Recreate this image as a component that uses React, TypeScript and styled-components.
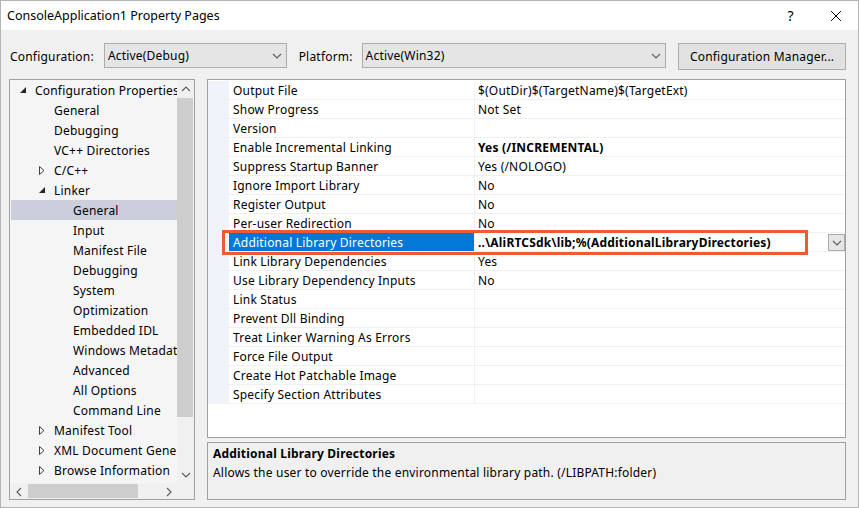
import * as React from "react";
import styled, { createGlobalStyle } from "styled-components";

const GlobalStyle = createGlobalStyle`
  html, body {
    margin: 0;
    padding: 0;
    background: #ffffff;
  }
  body {
    font-family: "Noto Sans", "Liberation Sans", sans-serif;
    font-size: 12px;
    letter-spacing: 0.2px;
    color: #000000;
  }
  * {
    box-sizing: border-box;
  }
`;

const Window = styled.div`
  width: 859px;
  height: 508px;
  border: 1px solid #b4b4b4;
  display: flex;
  flex-direction: column;
  background: #f0f0f0;
  overflow: hidden;
`;

const TitleBar = styled.div`
  height: 29px;
  flex: none;
  display: flex;
  align-items: center;
  background: #ffffff;
  padding-left: 6px;
  font-size: 12.5px;
  letter-spacing: 0;
`;

const TitleText = styled.div`
  flex: 1;
`;

const TitleButton = styled.div`
  width: 45px;
  height: 29px;
  display: flex;
  align-items: center;
  justify-content: center;
  font-size: 14px;
`;

const Body = styled.div`
  flex: 1;
  display: flex;
  flex-direction: column;
  padding: 13px 12px 7px 8px;
  min-height: 0;
`;

const ConfigRow = styled.div`
  display: flex;
  align-items: flex-start;
  height: 27px;
  flex: none;
`;

const Label = styled.div<{ $width: number; $gap?: number }>`
  width: ${(p) => p.$width}px;
  margin-left: ${(p) => p.$gap ?? 0}px;
  height: 27px;
  display: flex;
  align-items: center;
  padding-left: 1px;
`;

const Combo = styled.div<{ $width: number }>`
  width: ${(p) => p.$width}px;
  height: 25px;
  display: flex;
  align-items: center;
  background: #e5e5e5;
  border: 1px solid #acacac;
  padding: 0 4px 0 3px;
`;

const ComboText = styled.span`
  flex: 1;
`;

const Button = styled.div`
  width: 168px;
  height: 27px;
  margin-left: 12px;
  display: flex;
  align-items: center;
  justify-content: center;
  background: #e1e1e1;
  border: 1px solid #adadad;
`;

const Main = styled.div`
  flex: 1;
  display: flex;
  margin-top: 9px;
  min-height: 0;
`;

const TreePanel = styled.div`
  width: 186px;
  flex: none;
  border: 1px solid #a0a0a0;
  display: grid;
  grid-template-columns: 1fr 17px;
  grid-template-rows: 1fr 16px;
  background: #f0f0f0;
`;

const TreeList = styled.div`
  background: #f5f5f5;
  padding: 0 0 0 1px;
  overflow: hidden;
`;

const TreeRow = styled.div<{ $level: number; $selected?: boolean }>`
  height: 20px;
  display: flex;
  align-items: center;
  white-space: nowrap;
  padding-left: ${(p) => 6 + p.$level * 19}px;
  background: ${(p) => (p.$selected ? "#cccedb" : "transparent")};
`;

const ToggleSlot = styled.span`
  width: 18px;
  flex: none;
  display: flex;
  justify-content: flex-end;
  padding-right: 9px;
`;

const VScroll = styled.div`
  display: flex;
  flex-direction: column;
  background: #f0f0f0;
`;

const HScroll = styled.div`
  display: flex;
  align-items: stretch;
  background: #f0f0f0;
`;

const ScrollArrow = styled.div`
  width: 17px;
  height: 17px;
  flex: none;
  display: flex;
  align-items: center;
  justify-content: center;
`;

const VThumb = styled.div`
  height: 319px;
  margin: 1px 1px 0 0;
  background: #cdcdcd;
`;

const Spacer = styled.div`
  flex: 1;
`;

const HThumb = styled.div`
  width: 110px;
  margin: 1px 0 1px 1px;
  background: #cdcdcd;
`;

const RightColumn = styled.div`
  flex: 1;
  margin-left: 12px;
  display: flex;
  flex-direction: column;
  min-width: 0;
`;

const Grid = styled.div`
  position: relative;
  flex: 1;
  background: #ffffff;
  border: 1px solid #a0a0a0;
  padding-top: 1px;
`;

const GridRow = styled.div`
  height: 19px;
  display: grid;
  grid-template-columns: 21px 245px 1fr;
`;

const MarginCell = styled.div`
  background: #f0f4fa;
`;

const NameCell = styled.div<{ $selected?: boolean }>`
  display: flex;
  align-items: center;
  padding-left: 4px;
  white-space: nowrap;
  border-bottom: 1px solid #f0f0f0;
  background: ${(p) => (p.$selected ? "#0078d7" : "#ffffff")};
  color: ${(p) => (p.$selected ? "#ffffff" : "#000000")};
`;

const ValueCell = styled.div<{ $bold?: boolean }>`
  display: flex;
  align-items: center;
  padding-left: 3px;
  white-space: nowrap;
  border-left: 1px solid #f0f0f0;
  border-bottom: 1px solid #f0f0f0;
  font-weight: ${(p) => (p.$bold ? 700 : 400)};
`;

const CellDrop = styled.div`
  width: 17px;
  height: 17px;
  margin-left: auto;
  margin-top: 1px;
  display: flex;
  align-items: center;
  justify-content: center;
  background: #e5e5e5;
  border: 1px solid #acacac;
`;

const Highlight = styled.div`
  position: absolute;
  left: 14px;
  top: 150px;
  width: 586px;
  height: 25px;
  border: 3px solid #ee5a36;
  pointer-events: none;
`;

const Description = styled.div`
  height: 58px;
  flex: none;
  margin-top: 4px;
  border: 1px solid #a0a0a0;
  padding: 1px 5px;
  line-height: 19px;
`;

const DescTitle = styled.div`
  font-weight: 700;
`;

const Chevron = ({ dir = "down" }: { dir?: "down" | "up" | "left" | "right" }) => {
  const pts = {
    down: "1,1 5,5 9,1",
    up: "1,5 5,1 9,5",
    left: "5,1 1,5 5,9",
    right: "1,1 5,5 1,9",
  }[dir];
  const vertical = dir === "down" || dir === "up";
  return (
    <svg width={vertical ? 10 : 6} height={vertical ? 6 : 10} viewBox={vertical ? "0 0 10 6" : "0 0 6 10"}>
      <polyline points={pts} fill="none" stroke="#606060" strokeWidth="1.2" />
    </svg>
  );
};

const Toggle = ({ state }: { state?: "open" | "closed" }) => {
  if (state === "open")
    return (
      <svg width="6" height="6" viewBox="0 0 6 6">
        <polygon points="6,0 6,6 0,6" fill="#262626" />
      </svg>
    );
  if (state === "closed")
    return (
      <svg width="6" height="9" viewBox="0 0 6 9">
        <polygon points="0.5,0.5 5,4.5 0.5,8.5" fill="none" stroke="#404040" strokeWidth="1" />
      </svg>
    );
  return null;
};

type TreeItem = { label: string; level: number; toggle?: "open" | "closed"; selected?: boolean };

const treeItems: TreeItem[] = [
  { label: "Configuration Properties", level: 0, toggle: "open" },
  { label: "General", level: 1 },
  { label: "Debugging", level: 1 },
  { label: "VC++ Directories", level: 1 },
  { label: "C/C++", level: 1, toggle: "closed" },
  { label: "Linker", level: 1, toggle: "open" },
  { label: "General", level: 2, selected: true },
  { label: "Input", level: 2 },
  { label: "Manifest File", level: 2 },
  { label: "Debugging", level: 2 },
  { label: "System", level: 2 },
  { label: "Optimization", level: 2 },
  { label: "Embedded IDL", level: 2 },
  { label: "Windows Metadata", level: 2 },
  { label: "Advanced", level: 2 },
  { label: "All Options", level: 2 },
  { label: "Command Line", level: 2 },
  { label: "Manifest Tool", level: 1, toggle: "closed" },
  { label: "XML Document Generator", level: 1, toggle: "closed" },
  { label: "Browse Information", level: 1, toggle: "closed" },
];

type Prop = { name: string; value?: string; bold?: boolean; selected?: boolean };

const properties: Prop[] = [
  { name: "Output File", value: "$(OutDir)$(TargetName)$(TargetExt)" },
  { name: "Show Progress", value: "Not Set" },
  { name: "Version" },
  { name: "Enable Incremental Linking", value: "Yes (/INCREMENTAL)", bold: true },
  { name: "Suppress Startup Banner", value: "Yes (/NOLOGO)" },
  { name: "Ignore Import Library", value: "No" },
  { name: "Register Output", value: "No" },
  { name: "Per-user Redirection", value: "No" },
  {
    name: "Additional Library Directories",
    value: "..\\AliRTCSdk\\lib;%(AdditionalLibraryDirectories)",
    bold: true,
    selected: true,
  },
  { name: "Link Library Dependencies", value: "Yes" },
  { name: "Use Library Dependency Inputs", value: "No" },
  { name: "Link Status" },
  { name: "Prevent Dll Binding" },
  { name: "Treat Linker Warning As Errors" },
  { name: "Force File Output" },
  { name: "Create Hot Patchable Image" },
  { name: "Specify Section Attributes" },
];

const App: React.FunctionComponent = (): JSX.Element => {
  return (
    <>
      <GlobalStyle />
      <Window>
        <TitleBar>
          <TitleText>ConsoleApplication1 Property Pages</TitleText>
          <TitleButton>?</TitleButton>
          <TitleButton>
            <svg width="12" height="12" viewBox="0 0 12 12">
              <path d="M1 1 L11 11 M11 1 L1 11" stroke="#000" strokeWidth="1" />
            </svg>
          </TitleButton>
        </TitleBar>
        <Body>
          <ConfigRow>
            <Label $width={95}>Configuration:</Label>
            <Combo $width={183}>
              <ComboText>Active(Debug)</ComboText>
              <Chevron />
            </Combo>
            <Label $width={64} $gap={11}>
              Platform:
            </Label>
            <Combo $width={305}>
              <ComboText>Active(Win32)</ComboText>
              <Chevron />
            </Combo>
            <Button>Configuration Manager...</Button>
          </ConfigRow>
          <Main>
            <TreePanel>
              <TreeList>
                {treeItems.map((item, i) => (
                  <TreeRow key={i} $level={item.level} $selected={item.selected}>
                    <ToggleSlot>
                      <Toggle state={item.toggle} />
                    </ToggleSlot>
                    {item.label}
                  </TreeRow>
                ))}
              </TreeList>
              <VScroll>
                <ScrollArrow>
                  <Chevron dir="up" />
                </ScrollArrow>
                <VThumb />
                <Spacer />
                <ScrollArrow>
                  <Chevron dir="down" />
                </ScrollArrow>
              </VScroll>
              <HScroll>
                <ScrollArrow>
                  <Chevron dir="left" />
                </ScrollArrow>
                <HThumb />
                <Spacer />
                <ScrollArrow>
                  <Chevron dir="right" />
                </ScrollArrow>
              </HScroll>
              <div />
            </TreePanel>
            <RightColumn>
              <Grid>
                {properties.map((p, i) => (
                  <GridRow key={i}>
                    <MarginCell />
                    <NameCell $selected={p.selected}>{p.name}</NameCell>
                    <ValueCell $bold={p.bold}>
                      {p.value}
                      {p.selected && (
                        <CellDrop>
                          <Chevron />
                        </CellDrop>
                      )}
                    </ValueCell>
                  </GridRow>
                ))}
                <Highlight />
              </Grid>
              <Description>
                <DescTitle>Additional Library Directories</DescTitle>
                <div>Allows the user to override the environmental library path. (/LIBPATH:folder)</div>
              </Description>
            </RightColumn>
          </Main>
        </Body>
      </Window>
    </>
  );
};

export default App;
